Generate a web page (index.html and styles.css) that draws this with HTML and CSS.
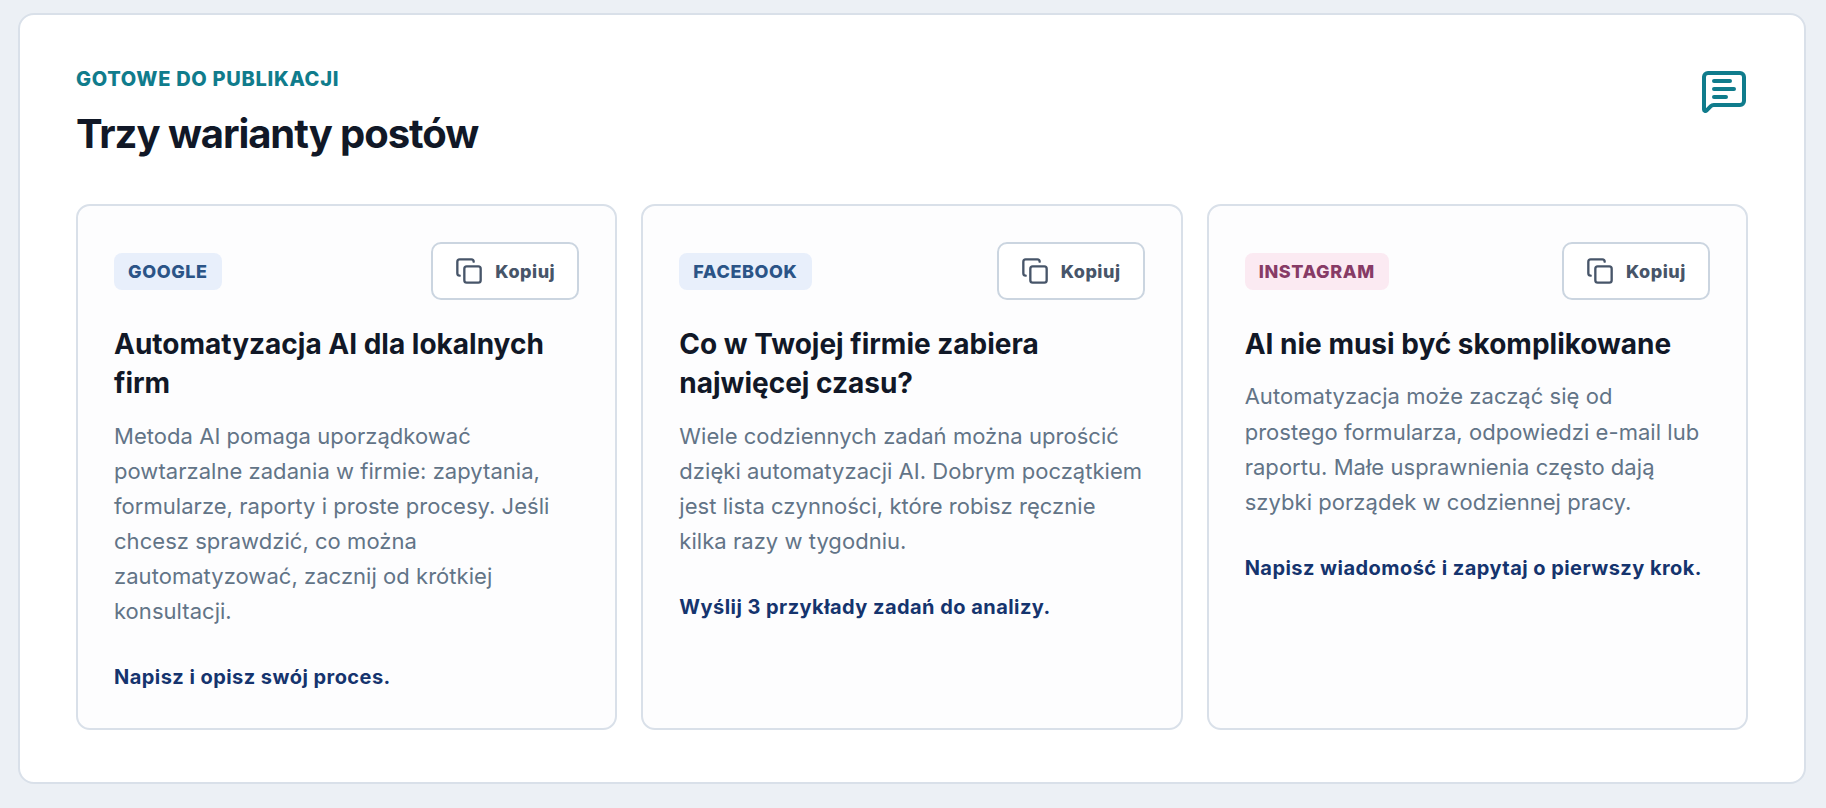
FILE: index.html
```html
<!DOCTYPE html>
<html lang="pl">
<head>
<meta charset="utf-8">
<title>Trzy warianty postów</title>
<link rel="stylesheet" href="styles.css">
</head>
<body>
<svg class="sprite" width="0" height="0" aria-hidden="true">
  <symbol id="copy" viewBox="0 0 24 24">
    <rect x="8" y="8" width="14" height="14" rx="2"/>
    <path d="M4 16c-1.1 0-2-.9-2-2V4c0-1.1.9-2 2-2h10c1.1 0 2 .9 2 2"/>
  </symbol>
</svg>
<section class="panel">
  <header class="panel-head">
    <div>
      <p class="eyebrow">Gotowe do publikacji</p>
      <h2 class="heading">Trzy warianty postów</h2>
    </div>
    <svg class="icon head-icon" viewBox="0 0 24 24" aria-hidden="true">
      <path d="M22 17a2 2 0 0 1-2 2H6.828a2 2 0 0 0-1.414.586l-2.202 2.202A.71.71 0 0 1 2 21.286V5a2 2 0 0 1 2-2h16a2 2 0 0 1 2 2z"/>
      <path d="M7 11h10M7 15h6M7 7h8"/>
    </svg>
  </header>
  <div class="cards">
    <article class="card">
      <div class="card-top">
        <span class="badge">Google</span>
        <button class="copy" type="button"><svg class="icon copy-icon"><use href="#copy"/></svg><span>Kopiuj</span></button>
      </div>
      <h3 class="title">Automatyzacja AI dla lokalnych<br>firm</h3>
      <p class="text">Metoda AI pomaga uporządkować<br>powtarzalne zadania w firmie: zapytania,<br>formularze, raporty i proste procesy. Jeśli<br>chcesz sprawdzić, co można<br>zautomatyzować, zacznij od krótkiej<br>konsultacji.</p>
      <strong class="cta">Napisz i opisz swój proces.</strong>
    </article>
    <article class="card">
      <div class="card-top">
        <span class="badge">Facebook</span>
        <button class="copy" type="button"><svg class="icon copy-icon"><use href="#copy"/></svg><span>Kopiuj</span></button>
      </div>
      <h3 class="title">Co w Twojej firmie zabiera<br>najwięcej czasu?</h3>
      <p class="text">Wiele codziennych zadań można uprościć<br>dzięki automatyzacji AI. Dobrym początkiem<br>jest lista czynności, które robisz ręcznie<br>kilka razy w tygodniu.</p>
      <strong class="cta">Wyślij 3 przykłady zadań do analizy.</strong>
    </article>
    <article class="card">
      <div class="card-top">
        <span class="badge badge-pink">Instagram</span>
        <button class="copy" type="button"><svg class="icon copy-icon"><use href="#copy"/></svg><span>Kopiuj</span></button>
      </div>
      <h3 class="title">AI nie musi być skomplikowane</h3>
      <p class="text">Automatyzacja może zacząć się od<br>prostego formularza, odpowiedzi e-mail lub<br>raportu. Małe usprawnienia często dają<br>szybki porządek w codziennej pracy.</p>
      <strong class="cta">Napisz wiadomość i zapytaj o pierwszy krok.</strong>
    </article>
  </div>
</section>
</body>
</html>
```
FILE: styles.css
```css
* { box-sizing: border-box; }
body {
  margin: 0;
  height: 808px;
  overflow: hidden;
  padding: 13px 20px 24px 18px;
  background: #ecf0f5;
  color: #111827;
  font-family: Inter, "Liberation Sans", sans-serif;
}
.sprite { position: absolute; }
.panel {
  height: 771px;
  padding: 52px 56px;
  background: #fff;
  border: 2px solid #d9e0e9;
  border-radius: 16px;
}
.panel-head {
  display: flex;
  justify-content: space-between;
  align-items: flex-start;
  height: 137px;
}
.eyebrow {
  margin: 0;
  font-size: 20px;
  line-height: 24px;
  font-weight: 800;
  letter-spacing: 0.7px;
  text-transform: uppercase;
  color: #107c8c;
}
.heading {
  margin: 18px 0 0;
  font-size: 40px;
  line-height: 50px;
  font-weight: 700;
  letter-spacing: -1.06px;
}
.icon {
  fill: none;
  stroke: currentColor;
  stroke-width: 2;
  stroke-linecap: round;
  stroke-linejoin: round;
  flex: none;
}
.head-icon { width: 48px; height: 48px; color: #107c8c; }
.cards {
  display: grid;
  grid-template-columns: repeat(3, 1fr);
  gap: 24px;
  height: 526px;
}
.card {
  height: 526px;
  padding: 36px;
  background: #fdfdfe;
  border: 2px solid #d9e0e9;
  border-radius: 14px;
  white-space: nowrap;
}
.card-top {
  display: flex;
  justify-content: space-between;
  align-items: center;
}
.badge {
  padding: 0 14px;
  font-size: 18px;
  line-height: 37px;
  font-weight: 800;
  letter-spacing: 0.6px;
  text-transform: uppercase;
  color: #2b5487;
  background: #e8effb;
  border-radius: 8px;
}
.badge-pink { color: #873b66; background: #fbeaf2; }
.copy {
  display: flex;
  align-items: center;
  gap: 12px;
  width: 148px;
  height: 58px;
  padding: 2px 22px 0;
  font: 800 18px/24px Inter, "Liberation Sans", sans-serif;
  letter-spacing: 0.5px;
  color: #475569;
  background: #fff;
  border: 2px solid #cbd5e0;
  border-radius: 10px;
}
.copy-icon { width: 28px; height: 28px; margin-top: -2px; }
.title {
  margin: 25px 0 0;
  font-size: 28px;
  line-height: 39.4px;
  font-weight: 700;
}
.text {
  margin: 15px 0 0;
  font-size: 22px;
  line-height: 35.1px;
  letter-spacing: 0.04px;
  color: #627487;
}
.cta {
  display: block;
  margin-top: 33px;
  font-size: 20px;
  line-height: 30px;
  font-weight: 700;
  letter-spacing: 0.45px;
  color: #15346e;
}
```
